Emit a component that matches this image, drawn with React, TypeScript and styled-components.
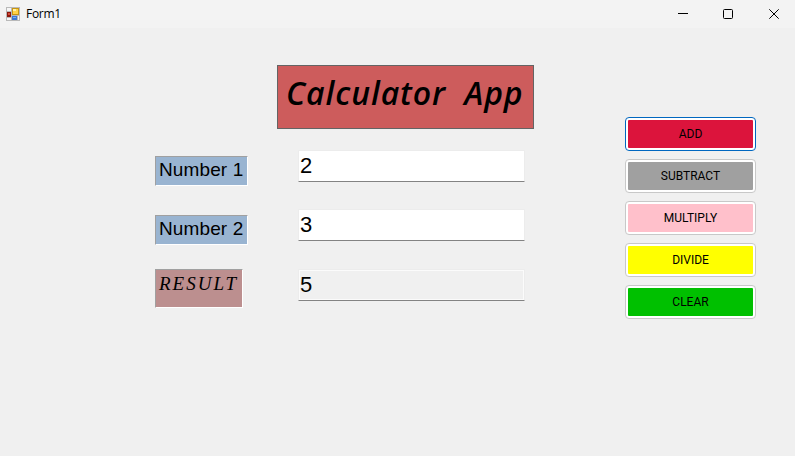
import React from "react";
import styled, { createGlobalStyle } from "styled-components";

const GlobalStyle = createGlobalStyle`
  *, *::before, *::after { box-sizing: border-box; }
  body { margin: 0; background: #f0f0f0; overflow: hidden; }
`;

const Window = styled.div`
  width: 795px;
  height: 456px;
  display: flex;
  flex-direction: column;
  background: #f0f0f0;
  color: #000;
  font-family: "Liberation Sans", Arial, sans-serif;
`;

const TitleBar = styled.header`
  height: 28px;
  flex: none;
  display: flex;
  align-items: center;
  padding-left: 6px;
  background: #f3f3f3;
`;

const Caption = styled.span`
  flex: 1;
  margin-left: 6px;
  font: 12px/16px "Open Sans", sans-serif;
  letter-spacing: -0.3px;
`;

const WindowControls = styled.div`
  display: flex;
`;

const ControlButton = styled.button`
  width: 45px;
  height: 28px;
  padding: 0;
  border: 0;
  background: transparent;
  display: grid;
  place-items: center;

  &:last-child {
    padding-left: 2px;
  }
`;

const Client = styled.main`
  flex: 1;
  display: flex;
  align-items: flex-start;
  padding-left: 155px;
`;

const Calculator = styled.section`
  width: 470px;
  padding-top: 37px;
`;

const Heading = styled.h1`
  width: 257px;
  height: 64px;
  margin: 0 0 21px 122px;
  padding-left: 8px;
  border: 1px solid #646464;
  background: #cd5c5c;
  font: italic 600 32px/54px "Open Sans", sans-serif;
  letter-spacing: 0.9px;
  word-spacing: 9px;
  white-space: nowrap;
`;

const Fields = styled.div`
  display: grid;
  grid-template-columns: 143px 227px;
  grid-template-rows: 36px 35px 39px;
  row-gap: 24px;
`;

const Label = styled.label`
  width: 93px;
  height: 30px;
  align-self: end;
  padding-left: 3px;
  border: 1px solid;
  border-color: #a0a0a0 #fff #fff #a0a0a0;
  background: #99b4d1;
  font-size: 19px;
  line-height: 25px;
  letter-spacing: 0.12px;
  white-space: nowrap;
`;

const ResultLabel = styled(Label)`
  width: 88px;
  height: 39px;
  background: #bc8f8f;
  font: italic 19px/27px "Liberation Serif", serif;
  letter-spacing: 2px;
`;

const NumberInput = styled.input<{ $top?: number }>`
  width: 227px;
  height: 32px;
  margin: ${({ $top = 0 }) => $top}px 0 0;
  padding: 0 1px 1px;
  border: 1px solid #ececec;
  border-bottom-color: #838383;
  border-radius: 1px;
  outline: 0;
  background: #fff;
  color: #000;
  font: 22px/28px "Liberation Sans", Arial, sans-serif;

  &:read-only {
    background: #f0f0f0;
    box-shadow: inset 0 0 0 1px #fbfbfb;
  }
`;

const Actions = styled.nav`
  display: flex;
  flex-direction: column;
  gap: 8px;
  padding-top: 89px;
`;

const ActionButton = styled.button<{ $fill: string; $active?: boolean }>`
  width: 131px;
  height: 34px;
  padding: 2px;
  border: 1px solid ${({ $active }) => ($active ? "#0067c0" : "#c8c8c8")};
  border-radius: 4px;
  background:
    linear-gradient(${({ $fill }) => $fill}, ${({ $fill }) => $fill}) content-box,
    #fff;
  color: #000;
  font: 12px/28px Roboto, sans-serif;
`;

const AppIcon = () => (
  <svg width="14" height="14" viewBox="0 0 14 14" shapeRendering="crispEdges">
    <path fill="#b9b9b9" d="M0 0h14v14H0z" />
    <path fill="#f5f5f5" d="M1 1h4v3H1zM1 11h4v2H1zM12 9h1v4h-1z" />
    <path fill="#8c170d" d="M1 5h4v5H1z" />
    <path fill="#d44b38" d="M2 6h2v2H2z" />
    <path fill="#c79512" d="M6 1h7v7H6z" />
    <path fill="#ffd246" d="M7 2h5v5H7z" />
    <path fill="#fff0a8" d="M7 2h3v2H7z" />
    <path fill="#3c78d2" d="M6 9h5v4H6z" />
    <path fill="#79adf2" d="M7 10h3v1H7z" />
  </svg>
);

const actions = [
  { name: "ADD", fill: "#dc143c", active: true },
  { name: "SUBTRACT", fill: "#a0a0a0" },
  { name: "MULTIPLY", fill: "#ffc0cb" },
  { name: "DIVIDE", fill: "#ffff00" },
  { name: "CLEAR", fill: "#00c000" },
];

export default function App() {
  return (
    <Window>
      <GlobalStyle />
      <TitleBar>
        <AppIcon />
        <Caption>Form1</Caption>
        <WindowControls>
          <ControlButton aria-label="Minimize">
            <svg width="10" height="10"><path d="M0 4.5h10" stroke="#000" /></svg>
          </ControlButton>
          <ControlButton aria-label="Maximize">
            <svg width="10" height="10"><rect x=".5" y=".5" width="9" height="9" rx="1" fill="none" stroke="#000" /></svg>
          </ControlButton>
          <ControlButton aria-label="Close">
            <svg width="10" height="10"><path d="M.3.3l9.4 9.4M9.7.3L.3 9.7" stroke="#000" /></svg>
          </ControlButton>
        </WindowControls>
      </TitleBar>
      <Client>
        <Calculator>
          <Heading>Calculator App</Heading>
          <Fields>
            <Label htmlFor="first">Number 1</Label>
            <NumberInput id="first" defaultValue="2" />
            <Label htmlFor="second">Number 2</Label>
            <NumberInput id="second" defaultValue="3" $top={-1} />
            <ResultLabel htmlFor="result">RESULT</ResultLabel>
            <NumberInput id="result" value="5" readOnly />
          </Fields>
        </Calculator>
        <Actions>
          {actions.map(({ name, fill, active }) => (
            <ActionButton key={name} $fill={fill} $active={active}>{name}</ActionButton>
          ))}
        </Actions>
      </Client>
    </Window>
  );
}
